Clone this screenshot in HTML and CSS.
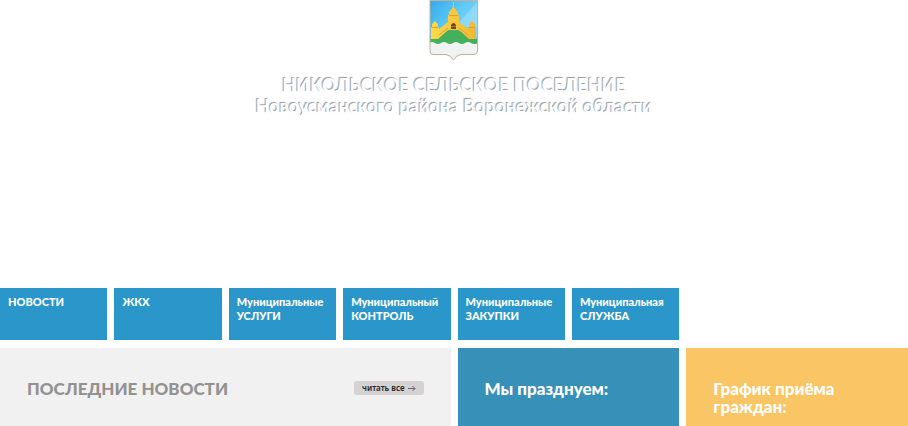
FILE: index.html
```html
<!DOCTYPE html>
<html lang="ru">
<head>
<meta charset="utf-8">
<meta name="viewport" content="width=device-width, initial-scale=1">
<title>Никольское сельское поселение</title>
<link rel="stylesheet" href="styles.css">
</head>
<body>
<header class="header">
  <svg class="emblem" viewBox="0 0 50 62" aria-hidden="true">
    <defs>
      <linearGradient id="sky" x1="0" y1="0" x2="1" y2="1">
        <stop offset="0" stop-color="#30a8ea"/>
        <stop offset=".4" stop-color="#62caf6"/>
        <stop offset="1" stop-color="#a6e0f9"/>
      </linearGradient>
      <linearGradient id="gold" x1="0" y1="0" x2="1" y2="0">
        <stop offset="0" stop-color="#ffd94b"/>
        <stop offset="1" stop-color="#f2b732"/>
      </linearGradient>
      <clipPath id="shield"><path d="M1 0H48V51Q48 54 45 54H32Q27 55 24.500 59Q22 55 17 54H4Q1 54 1 51Z"/></clipPath>
    </defs>
    <g clip-path="url(#shield)">
      <path fill="url(#sky)" d="M0 0H50V62H0Z"/>
      <path fill="#c2ebfb" opacity=".35" d="M50 0L26 27H50Z"/>
      <path fill="#45b05a" d="M0 39L9 37Q19 29 24.500 29T40 37L50 39V46H0Z"/>
      <path fill="url(#gold)" d="M2 39V28L3 27V24L6 21L9 24V27L10 28V29L19 22V15H20V12L22 10L24 7V2H25V7L27 10L29 12V15H30V22L39 29V28L40 27V24L43 21L46 24V27L47 28V39H40L30 30H19L9 39Z"/>
      <path fill="none" stroke="#dba52d" d="M3 27.500H9M40 27.500H46M20 15.500H29M10 35L19 28M30 28L39 35"/>
      <path fill="#6b4a16" d="M22 29V25Q24.500 21 27 25V29Z"/>
      <path stroke="#a87d25" d="M22 26.500H27"/>
      <path fill="#f1f3f3" d="M0 43Q3 41 6 43T12 43T18 43T24 43T30 43T36 43T42 43T49 43V62H0Z"/>
    </g>
    <path fill="none" stroke="#c4af98" d="M1 0V51Q1 54.500 4 54.500H17Q22 55.500 24.500 60Q27 55.500 32 54.500H45Q48.500 54.500 48.500 51V.5H1"/>
  </svg>
  <h1 class="title">НИКОЛЬСКОЕ СЕЛЬСКОЕ ПОСЕЛЕНИЕ<br>Новоусманского района Воронежской области</h1>
</header>
<nav class="grid" aria-label="Разделы">
  <a class="tile" href="#">НОВОСТИ</a>
  <a class="tile" href="#">ЖКХ</a>
  <a class="tile" href="#">Муниципальные УСЛУГИ</a>
  <a class="tile" href="#">Муниципальный КОНТРОЛЬ</a>
  <a class="tile" href="#">Муниципальные ЗАКУПКИ</a>
  <a class="tile" href="#">Муниципальная СЛУЖБА</a>
</nav>
<main class="grid panels">
  <section class="panel news">
    <h2 class="heading">ПОСЛЕДНИЕ НОВОСТИ</h2>
    <a class="more" href="#">читать все
      <svg class="arrow" viewBox="0 0 8 7" aria-hidden="true"><path d="M0 3.500H7M4.500 1L7 3.500L4.500 6"/></svg>
    </a>
  </section>
  <section class="panel holidays"><h2 class="heading">Мы празднуем:</h2></section>
  <section class="panel schedule"><h2 class="heading">График приёма граждан:</h2></section>
</main>
</body>
</html>
```

FILE: styles.css
```css
* {
  box-sizing: border-box;
}

body {
  display: flex;
  flex-direction: column;
  min-height: 100vh;
  margin: 0;
  background: #fff;
  font-family: Lato, "Liberation Sans", sans-serif;
}

.header {
  display: flex;
  flex-direction: column;
  align-items: center;
  min-height: 288px;
}

.emblem {
  display: block;
  width: 50px;
  height: 62px;
}

.title {
  margin: 13px 0 0;
  color: #fff;
  font-size: 18px;
  font-weight: 700;
  line-height: 21px;
  text-align: center;
  text-shadow: -1px -1px 1px #999;
}

.grid {
  display: grid;
  grid-template-columns: repeat(8, minmax(0, 1fr));
  gap: 7px;
}

.tile {
  min-height: 52px;
  padding: 7px 8px;
  background: #2a96c9;
  color: #fff;
  font-size: 11px;
  font-weight: 900;
  line-height: 14px;
  text-decoration: none;
}

.panels {
  flex: 1;
  margin-top: 8px;
}

.panel {
  padding: 32px 27px 0;
  color: #fff;
}

.news {
  display: flex;
  grid-column: span 4;
  align-items: flex-start;
  justify-content: space-between;
  background: #f1f1f1;
  color: #929292;
}

.holidays {
  grid-column: span 2;
  background: #3690b8;
}

.schedule {
  grid-column: span 2;
  background: #fac564;
}

.heading {
  margin: 0;
  font-size: 17px;
  font-weight: 900;
  line-height: 18px;
}

.more {
  display: flex;
  gap: 3px;
  align-items: center;
  margin-top: 1px;
  padding: 0 8px;
  border-radius: 3px;
  background: #d4d2d3;
  color: #222;
  font-family: "Noto Sans", sans-serif;
  font-size: 8px;
  font-weight: 600;
  line-height: 14px;
  text-decoration: none;
}

.arrow {
  width: 8px;
  height: 7px;
  fill: none;
  stroke: #666;
}
```
